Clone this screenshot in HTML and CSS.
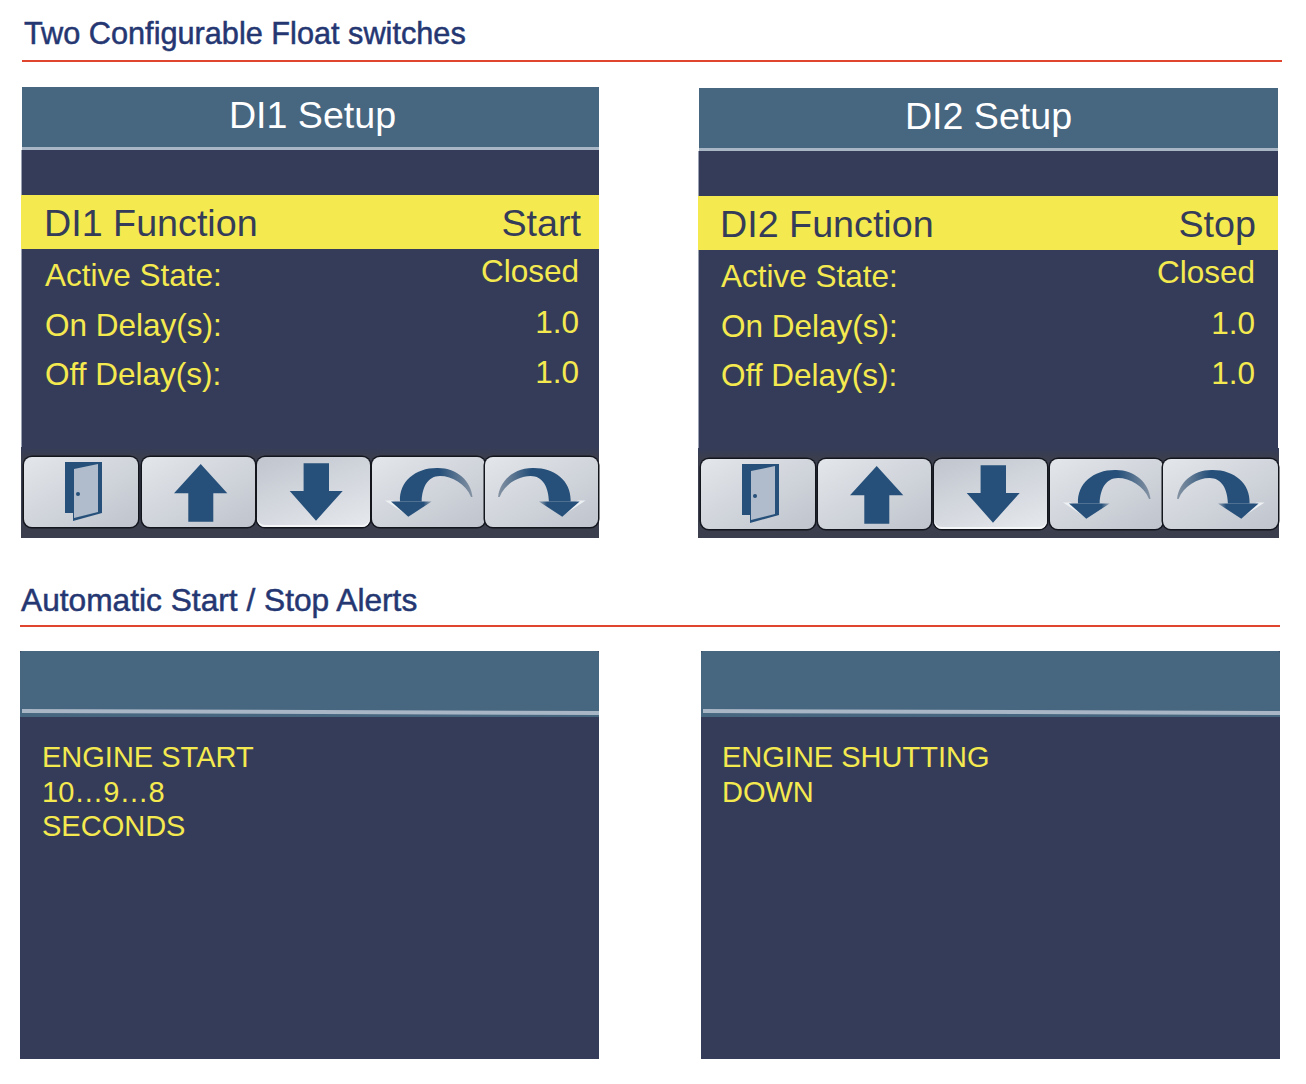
FILE: index.html
```html
<!DOCTYPE html>
<html lang="en">
<head>
  <meta charset="UTF-8" />
  <title>Float switches and alerts</title>
  <link rel="stylesheet" href="styles.css">
</head>
<body>
  <svg class="icon-defs" width="0" height="0" aria-hidden="true">
    <defs>
      <linearGradient id="arc-fade" x1="0.55" y1="0" x2="1" y2="0">
        <stop offset="0" stop-color="#26507a" />
        <stop offset="1" stop-color="#8593a3" />
      </linearGradient>
      <linearGradient id="head-fade" x1="0" y1="0" x2="1" y2="0">
        <stop offset="0.8" stop-color="#26507a" />
        <stop offset="1" stop-color="#9aa6b4" />
      </linearGradient>
      <symbol id="icon-exit" viewBox="0 0 114 70">
        <path d="M41 5H78V56L49 64V56H41Z" fill="#26507a" />
        <path d="M50 12L74 7V55L50 61Z" fill="#b0bccb" />
        <circle cx="54" cy="37" r="2" fill="#26507a" />
      </symbol>
      <symbol id="icon-up" viewBox="0 0 113 70">
        <path d="M58.7 7L85.3 36.3H71.3V64.7H46.3V36.3H32Z" fill="#26507a" />
      </symbol>
      <symbol id="icon-down" viewBox="0 0 113 70">
        <path d="M46.6 6.3H72V34H85.7L59 63.7L32.7 34H46.6Z" fill="#26507a" />
      </symbol>
      <symbol id="icon-back" viewBox="0 0 113 70">
        <path d="M13 43.5H21L37 56L35 58Z" fill="#eef1f4" />
        <path d="M28 44.5C27 24 44 10.5 66 11C85 11 99 24 100.5 40L99 40C94 27 80 19 68 19C56 19 50 30 49.7 44.5Z" fill="url(#arc-fade)" />
        <path d="M19 44.5H59.7L36.3 59.7Z" fill="url(#head-fade)" />
      </symbol>
      <symbol id="icon-forward" viewBox="0 0 113 70">
        <g transform="matrix(-1 0 0 1 113.6 0)">
          <path d="M13 43.5H21L37 56L35 58Z" fill="#eef1f4" />
          <path d="M28 44.5C27 24 44 10.5 66 11C85 11 99 24 100.5 40L99 40C94 27 80 19 68 19C56 19 50 30 49.7 44.5Z" fill="url(#arc-fade)" />
          <path d="M19 44.5H59.7L36.3 59.7Z" fill="url(#head-fade)" />
        </g>
      </symbol>
    </defs>
  </svg>

  <section class="section section-switches">
    <h2 class="section-title">Two Configurable Float switches</h2>
    <div class="panels">
      <div class="panel panel-di1">
        <div class="panel-header">DI1 Setup</div>
        <div class="panel-spacer"></div>
        <div class="selected-row"><span>DI1 Function</span><span>Start</span></div>
        <div class="rows">
          <div class="labels">
            <div>Active State:</div>
            <div>On Delay(s):</div>
            <div>Off Delay(s):</div>
          </div>
          <div class="values">
            <div>Closed</div>
            <div>1.0</div>
            <div>1.0</div>
          </div>
        </div>
        <div class="toolbar">
          <div class="btn btn-exit"><svg><use href="#icon-exit" /></svg></div>
          <div class="btn"><svg><use href="#icon-up" /></svg></div>
          <div class="btn btn-active"><svg><use href="#icon-down" /></svg></div>
          <div class="btn"><svg><use href="#icon-back" /></svg></div>
          <div class="btn btn-last"><svg><use href="#icon-forward" /></svg></div>
        </div>
      </div>

      <div class="panel panel-di2">
        <div class="panel-header">DI2 Setup</div>
        <div class="panel-spacer"></div>
        <div class="selected-row"><span>DI2 Function</span><span>Stop</span></div>
        <div class="rows">
          <div class="labels">
            <div>Active State:</div>
            <div>On Delay(s):</div>
            <div>Off Delay(s):</div>
          </div>
          <div class="values">
            <div>Closed</div>
            <div>1.0</div>
            <div>1.0</div>
          </div>
        </div>
        <div class="toolbar">
          <div class="btn btn-exit"><svg><use href="#icon-exit" /></svg></div>
          <div class="btn"><svg><use href="#icon-up" /></svg></div>
          <div class="btn btn-active"><svg><use href="#icon-down" /></svg></div>
          <div class="btn"><svg><use href="#icon-back" /></svg></div>
          <div class="btn btn-last"><svg><use href="#icon-forward" /></svg></div>
        </div>
      </div>
    </div>
  </section>

  <section class="section section-alerts">
    <h2 class="section-title">Automatic Start / Stop Alerts</h2>
    <div class="panels">
      <div class="alert">
        <div class="alert-header"><div class="alert-line"></div></div>
        <div class="alert-text">ENGINE START<br>10…9…8<br>SECONDS</div>
      </div>
      <div class="alert alert-right">
        <div class="alert-header"><div class="alert-line"></div></div>
        <div class="alert-text">ENGINE SHUTTING<br>DOWN</div>
      </div>
    </div>
  </section>
</body>
</html>
```

FILE: styles.css
```css
body {
  margin: 0;
  background: white;
  font-family: "Liberation Sans", Arial, sans-serif;
}
.icon-defs {
  display: block;
  height: 0;
}
.section {
  width: 1260px;
}
.section-switches {
  margin-left: 22px;
}
.section-alerts {
  margin-left: 20px;
  margin-top: 42px;
}
.section-title {
  margin: 0;
  font-weight: normal;
  line-height: 40px;
  color: #253772;
  -webkit-text-stroke: 0.5px #253772;
  border-bottom: 2px solid #e0452f;
}
.section-switches .section-title {
  padding: 14px 0 6px 2px;
  font-size: 30.7px;
}
.section-alerts .section-title {
  padding: 0 0 5px 1px;
  font-size: 31.7px;
}
.panels {
  display: flex;
}

/* setup screens */
.section-switches .panels {
  margin: 25px 0 0 -1px;
  align-items: flex-end;
}
.panel {
  display: flex;
  flex-direction: column;
}
.panel-di1 {
  width: 578px;
  height: 451px;
}
.panel-di2 {
  width: 581px;
  height: 450px;
  margin-left: 99px;
}
.panel-header {
  height: 60px;
  line-height: 56px;
  margin-left: 1px;
  background: #47667f;
  border-bottom: 3px solid #a9b6c6;
  color: white;
  font-size: 37.6px;
  text-align: center;
}
.panel-di1 .panel-header {
  padding-left: 4px;
}
.panel-spacer {
  height: 45px;
  background: #343c59;
  border-left: 1px solid #9aa1b0;
}
.selected-row {
  display: flex;
  justify-content: space-between;
  height: 54px;
  line-height: 56px;
  padding: 0 18px 0 23px;
  background: #f4ea4f;
  color: #343c59;
  font-size: 37.7px;
}
.panel-di2 .selected-row {
  padding: 0 22px 0 22px;
}
.panel-di2 .panel-header,
.panel-di2 .panel-spacer,
.panel-di2 .selected-row,
.panel-di2 .rows {
  margin-right: 1px;
}
.rows {
  display: flex;
  justify-content: space-between;
  flex: 1;
  overflow: hidden;
  background: #343c59;
  border-left: 1px solid #9aa1b0;
  color: #f4ea4f;
  font-size: 31.5px;
}
.labels {
  padding: 2px 0 0 23px;
  line-height: 49.5px;
}
.values {
  margin-top: -3px;
  padding-right: 20px;
  line-height: 50.5px;
  text-align: right;
}
.panel-di2 .labels {
  padding-left: 22px;
}
.panel-di2 .values {
  padding-right: 23px;
}
.toolbar {
  display: flex;
  gap: 2px;
  height: 91px;
  padding: 10px 1px 11px 3px;
  box-sizing: border-box;
  background: linear-gradient(#343c59, #3b3e4d 10px);
}
.panel-di2 .toolbar {
  height: 90px;
  gap: 3px;
  padding-top: 11px;
  padding-bottom: 10px;
}
.btn {
  flex: none;
  width: 113px;
  height: 70px;
  border-radius: 8px;
  background: linear-gradient(150deg, #e3e6ea, #bfc4cd);
  box-shadow: 0 0 0 1.5px #14161d;
}
.btn svg {
  display: block;
  width: 100%;
  height: 100%;
  filter: blur(0.4px);
}
.btn-exit {
  width: 114px;
  margin-right: 2px;
}
.panel-di2 .btn-exit {
  margin-right: 0;
}
.btn-active {
  background: linear-gradient(340deg, #e6e9ed, #c0c5ce);
  box-shadow: 0 0 0 1.5px #14161d, inset 0 -2px 0 #f3f5f7;
}
.btn-last {
  margin-left: -2px;
}
.panel-di2 .btn-last {
  width: 115px;
  margin-left: -3px;
}

/* alert screens */
.section-alerts .panels {
  margin-top: 24px;
}
.alert {
  width: 579px;
  height: 408px;
  background: #343c59;
}
.alert-right {
  margin-left: 102px;
}
.alert-header {
  height: 66px;
  padding: 59px 0 0 2px;
  box-sizing: border-box;
  overflow: hidden;
  border-radius: 2px 2px 0 0;
  background: #47667f;
}
.alert-line {
  height: 4px;
  background: #a9b6c6;
  transform: rotate(0.2deg);
}
.alert-text {
  padding: 23px 0 0 22px;
  color: #f4ea4f;
  font-size: 29px;
  line-height: 34.7px;
}
.alert-right .alert-text {
  padding-left: 21px;
}
```
